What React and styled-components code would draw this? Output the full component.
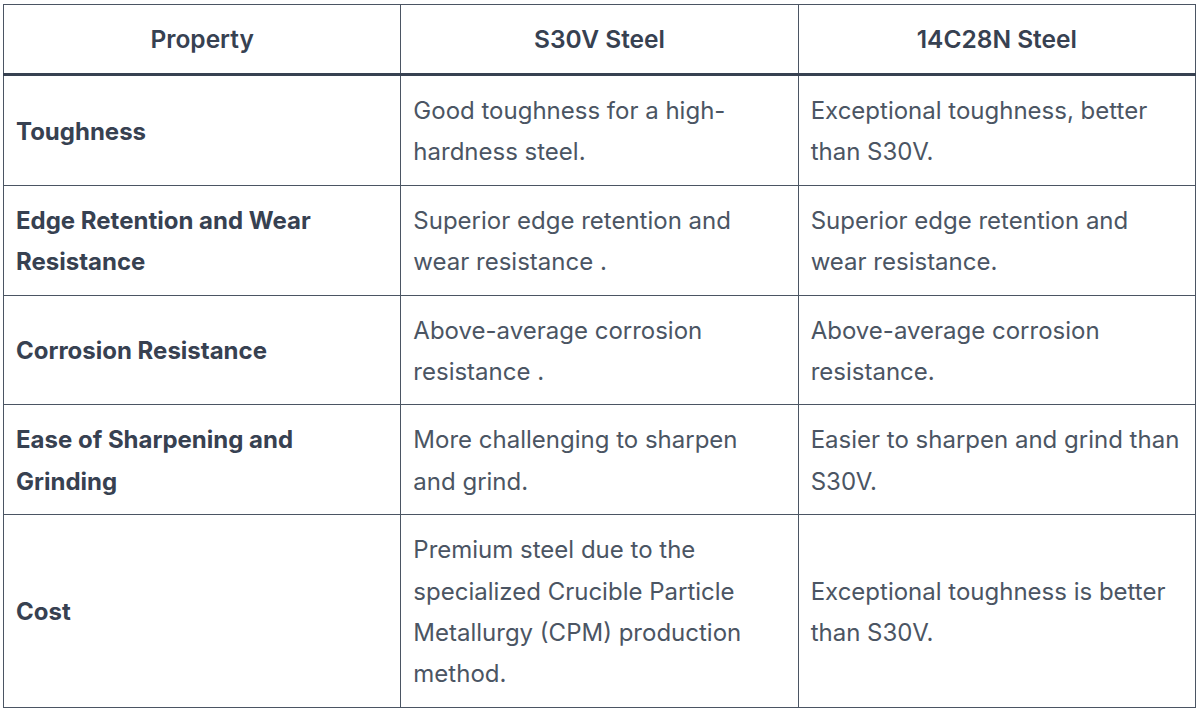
import React from "react";
import styled, { createGlobalStyle } from "styled-components";

const Global = createGlobalStyle`
  html, body { margin: 0; padding: 0; background: #ffffff; }
  body { font-family: Inter, "Noto Sans", "Liberation Sans", sans-serif; }
`;

const Wrap = styled.div`
  padding: 4px 4px 0 3px;
`;

const Table = styled.table`
  width: 1193px;
  table-layout: fixed;
  border-collapse: collapse;
  border: 1px solid #4b5563;
`;

const Th = styled.th`
  border: 1px solid #4b5563;
  border-bottom: 3px solid #374151;
  padding: 14px 12px 13px;
  font-size: 24.5px;
  line-height: 41px;
  font-weight: 600;
  color: #374151;
  text-align: center;
`;

const Td = styled.td`
  border: 1px solid #4b5563;
  padding: 14px 14px 12px 12px;
  font-size: 24px;
  line-height: 41.4px;
  font-weight: ${(p) => (p.$head ? 650 : 400)};
  color: ${(p) => (p.$head ? "#374151" : "#4b5563")};
  vertical-align: middle;
  text-align: left;
`;

const rows = [
  ["Toughness", "Good toughness for a high-hardness steel.", "Exceptional toughness, better than S30V."],
  ["Edge Retention and Wear Resistance", "Superior edge retention and wear resistance .", "Superior edge retention and wear resistance."],
  ["Corrosion Resistance", "Above-average corrosion resistance .", "Above-average corrosion resistance."],
  ["Ease of Sharpening and Grinding", "More challenging to sharpen and grind.", "Easier to sharpen and grind than S30V."],
  ["Cost", "Premium steel due to the specialized Crucible Particle Metallurgy (CPM) production method.", "Exceptional toughness is better than S30V."],
];

export default function App() {
  return (
    <>
      <Global />
      <Wrap>
        <Table>
          <thead>
            <tr>
              <Th>Property</Th>
              <Th>S30V Steel</Th>
              <Th>14C28N Steel</Th>
            </tr>
          </thead>
          <tbody>
            {rows.map((r) => (
              <tr key={r[0]}>
                <Td $head>{r[0]}</Td>
                <Td>{r[1]}</Td>
                <Td>{r[2]}</Td>
              </tr>
            ))}
          </tbody>
        </Table>
      </Wrap>
    </>
  );
}
